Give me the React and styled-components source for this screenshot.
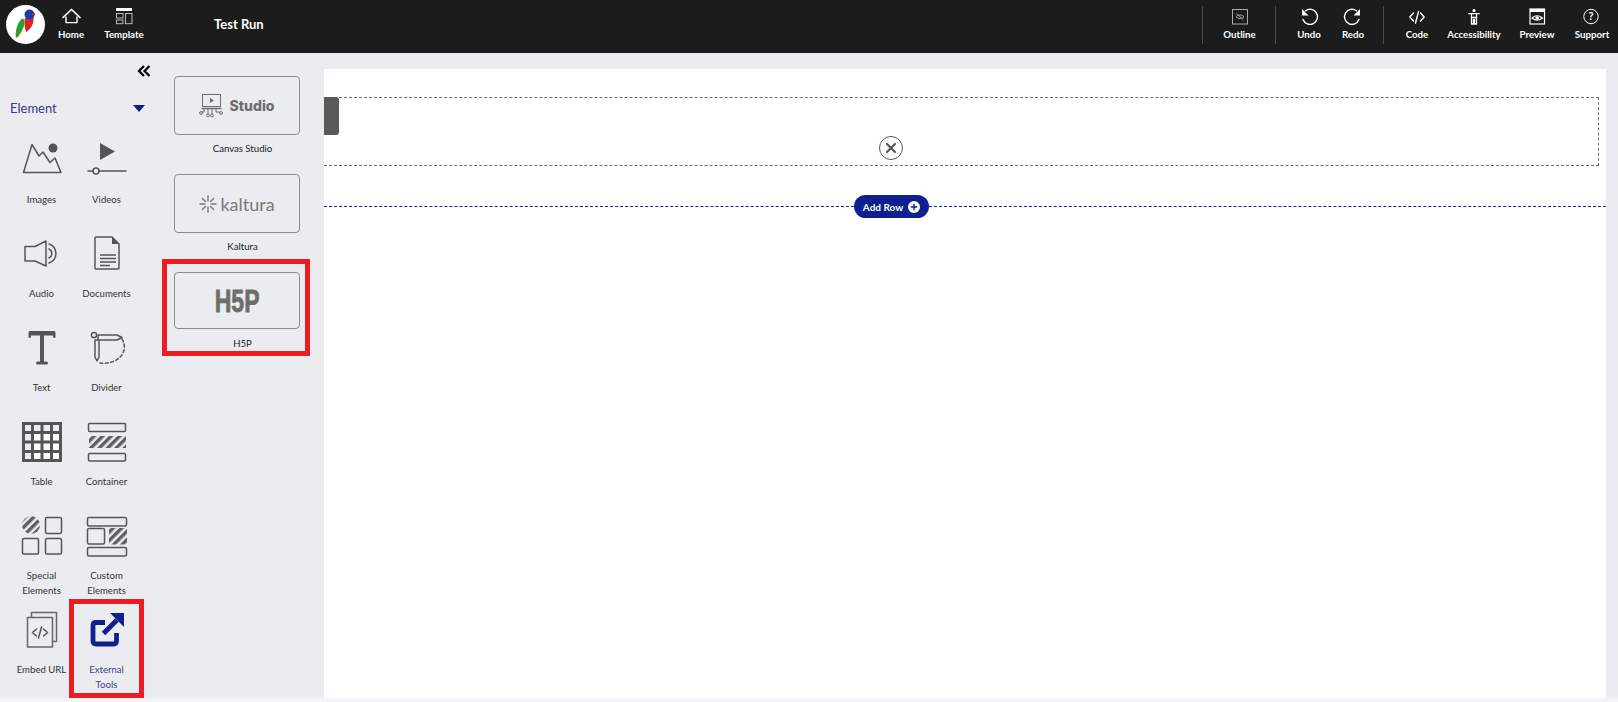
import React from "react";
import styled, { createGlobalStyle } from "styled-components";

const Global = createGlobalStyle`
  html, body { margin: 0; padding: 0; height: 702px; overflow: hidden; background: #f2f4f8; }
  body { font-family: Lato, "Noto Sans", "Liberation Sans", sans-serif; }
  #root { height: 702px; }
`;

const Page = styled.div`
  display: flex;
  flex-direction: column;
  height: 702px;
  background: #f2f4f8;
`;
const TopBar = styled.header`
  display: flex;
  align-items: stretch;
  justify-content: space-between;
  height: 53px;
  background: #1c1c1c;
  color: #fff;
  flex: none;
`;
const TopLeft = styled.div`
  display: flex;
  align-items: flex-start;
  padding-left: 6px;
`;
const TopRight = styled.div`
  display: flex;
  align-items: flex-start;
  padding-right: 10px;
`;
const Logo = styled.div`
  width: 39px;
  height: 39px;
  margin-top: 5px;
  border-radius: 50%;
  background: #fff;
  flex: none;
  overflow: hidden;
`;
const TopItem = styled.div`
  display: flex;
  flex-direction: column;
  align-items: center;
  width: ${(p) => p.$w}px;
  padding-top: ${(p) => p.$top || 7}px;
  gap: ${(p) => (p.$tight ? "0" : "0")};
  flex: none;
  svg { display: block; width: 24px; height: ${(p) => (p.$tight ? 19 : 20)}px; overflow: visible; }
`;
const TopLabel = styled.span`
  font-size: 9.7px;
  font-weight: 700;
  line-height: 14px;
  white-space: nowrap;
  color: #fff;
`;
const Title = styled.div`
  margin-left: 63px;
  font-size: 13px;
  font-weight: 700;
  line-height: 48px;
  color: #fff;
`;
const Section = styled.div`
  display: flex;
  align-items: flex-start;
  height: 38px;
  margin-top: 6px;
  border-left: 1px solid #4a4a4a;
  padding: ${(p) => p.$pad || "0"};
  margin-left: ${(p) => (p.$first ? 0 : -1)}px;
  & > div { padding-top: 1px; }
`;
const Body = styled.div`
  display: flex;
  flex: none;
  height: 645px;
  background: #ebecef;
`;
const Sidebar = styled.aside`
  width: 162px;
  flex: none;
  display: flex;
  flex-direction: column;
`;
const Collapse = styled.div`
  display: flex;
  justify-content: flex-end;
  padding: 11px 11px 0 0;
  height: 14px;
  svg { display: block; width: 14px; height: 14px; }
`;
const CategoryRow = styled.div`
  display: flex;
  align-items: center;
  justify-content: space-between;
  height: 20px;
  margin-top: 20px;
  padding: 0 17px 0 10px;
`;
const Category = styled.span`
  font-size: 13px;
  color: #34388f;
`;
const Caret = styled.span`
  width: 0;
  height: 0;
  border-left: 6px solid transparent;
  border-right: 6px solid transparent;
  border-top: 7px solid #10208f;
`;
const ToolGrid = styled.div`
  display: grid;
  grid-template-columns: 65px 65px;
  grid-auto-rows: 89px;
  row-gap: 5px;
  padding: 16px 0 0 9px;
`;
const Tool = styled.div`
  display: flex;
  flex-direction: column;
  align-items: center;
  padding-top: 4px;
  box-sizing: border-box;
  outline: ${(p) => (p.$marked ? "5px solid #ed1c24" : "none")};
  svg { display: block; width: 65px; height: 48px; flex: none; }
`;
const ToolLabel = styled.span`
  margin-top: 6px;
  font-size: 9.6px;
  line-height: 15px;
  text-align: center;
  white-space: nowrap;
  color: ${(p) => (p.$active ? "#3d4196" : "#333")};
`;
const Gallery = styled.aside`
  width: 162px;
  flex: none;
  padding: 15px 0 0 5px;
  box-sizing: border-box;
`;
const AppGroup = styled.div`
  width: 138px;
  height: ${(p) => p.$h}px;
  padding: 8px 0 0 7px;
  box-sizing: border-box;
  display: flex;
  flex-direction: column;
  align-items: flex-start;
  outline: ${(p) => (p.$marked ? "5px solid #ed1c24" : "none")};
`;
const AppCard = styled.div`
  width: 126px;
  height: ${(p) => p.$h}px;
  flex: none;
  box-sizing: border-box;
  border: 1px solid #8c8c8c;
  border-radius: 4px;
  display: flex;
  align-items: center;
  justify-content: center;
  color: #6d6d6d;
`;
const AppLabel = styled.span`
  align-self: center;
  margin: ${(p) => p.$gap}px 0 0 6px;
  font-size: 9.6px;
  line-height: 15px;
  color: #222;
`;
const StudioWord = styled.span`
  margin-left: 6px;
  font-family: Inter, "Liberation Sans", sans-serif;
  font-size: 14px;
  font-weight: 800;
  line-height: 1;
`;
const KalturaWord = styled.span`
  margin-left: 3px;
  font-family: Lato, "Liberation Sans", sans-serif;
  font-size: 18px;
  line-height: 1;
  color: #7a7a7a;
`;
const H5PWord = styled.span`
  display: inline-block;
  font-family: "Liberation Sans", sans-serif;
  font-size: 32px;
  font-weight: 700;
  line-height: 1;
  transform: scaleX(0.72);
  -webkit-text-stroke: 0.8px #6d6d6d;
  color: #6d6d6d;
`;
const Canvas = styled.main`
  flex: 1;
  margin: 16px 12px 0 0;
  background: #fff;
  padding-top: 28px;
`;
const DropRow = styled.div`
  position: relative;
  height: 69px;
  margin-right: 7px;
  box-sizing: border-box;
  border: 1px dashed #6f6f6f;
  border-left: none;
`;
const RowTab = styled.div`
  position: absolute;
  left: 0;
  top: -1px;
  width: 15px;
  height: 38px;
  background: #5a5a5a;
  border-radius: 0 3px 3px 0;
`;
const CloseButton = styled.div`
  position: absolute;
  left: 555px;
  top: 38px;
  width: 24px;
  height: 24px;
  box-sizing: border-box;
  border: 1px solid #555;
  border-radius: 50%;
  background: #fff;
  display: flex;
  align-items: center;
  justify-content: center;
  svg { width: 12px; height: 12px; display: block; }
`;
const AddRowLine = styled.div`
  display: flex;
  align-items: center;
  margin-top: 29px;
  height: 23px;
`;
const DashSegment = styled.div`
  flex: ${(p) => (p.$w ? `0 0 ${p.$w}px` : "1")};
  border-top: 1px dashed #10208f;
`;
const AddRowButton = styled.div`
  flex: none;
  width: 75px;
  height: 23px;
  border-radius: 12px;
  background: #10208f;
  color: #fff;
  display: flex;
  align-items: center;
  justify-content: center;
  gap: 5px;
  font-size: 10px;
  font-weight: 700;
  svg { width: 12px; height: 12px; display: block; }
`;

const G = { fill: "none", stroke: "#555", strokeWidth: 1.5, strokeLinejoin: "round", strokeLinecap: "round" };

const HatchDef = ({ id }) => (
  <defs>
    <pattern id={id} width="6" height="6" patternUnits="userSpaceOnUse" patternTransform="rotate(45)">
      <rect width="3.4" height="6" fill="#5f5f5f" />
    </pattern>
  </defs>
);

const icons = {
  images: (
    <svg viewBox="0 0 65 48">
      <path {...G} d="M14.5 34.5 L23 6.5 L30 18 L34 14 L41 24.5 L46 20 L52 34.5 Z" />
      <circle cx="44" cy="10" r="4.5" fill="#555" />
    </svg>
  ),
  videos: (
    <svg viewBox="0 0 65 48">
      <path d="M26 5 L41 13.5 L26 22 Z" fill="#555" />
      <path {...G} d="M14 33 H52" />
      <circle cx="22" cy="33" r="3" fill="#ebecef" stroke="#555" strokeWidth="1.5" />
    </svg>
  ),
  audio: (
    <svg viewBox="0 0 65 48">
      <path {...G} d="M16 14.5 H26 L37 9 V34 L26 29 H16 Z" />
      <path {...G} d="M40 12 A10 10 0 0 1 40 31 M40 17 A5 5 0 0 1 40 26" />
    </svg>
  ),
  documents: (
    <svg viewBox="0 0 65 48">
      <path {...G} d="M22 5 H38 L45 12 V36 Q45 37 44 37 H22 Q21 37 21 36 V6 Q21 5 22 5 Z" />
      <path d="M38 5 L45 12 H38 Z" fill="#555" />
      <path {...G} strokeLinecap="butt" d="M26 23 H42 M26 26.5 H42 M26 30 H42 M26 33.5 H36" />
    </svg>
  ),
  text: (
    <svg viewBox="0 0 65 48">
      <path
        fill="#555"
        d="M21 5 H45 Q46.5 5 46.5 6.5 V11 Q46.5 12 45.3 12 Q44 12 44 11 V9.5 H35 V35.5 H37.5 Q39 35.5 39 37 Q39 38.5 37.5 38.5 H28.5 Q27 38.5 27 37 Q27 35.5 28.5 35.5 H31 V9.5 H22 V11 Q22 12 20.8 12 Q19.5 12 19.5 11 V6.5 Q19.5 5 21 5 Z"
      />
    </svg>
  ),
  divider: (
    <svg viewBox="0 0 65 48">
      <circle {...G} cx="20" cy="9" r="2.6" />
      <path {...G} d="M24 9 H43 L48 11.5 L43 14 H24 Z M21 14 H25 V31 L23 35 L21 31 Z" />
      <path {...G} strokeDasharray="3 2.5" d="M48 13 C55 24 46 39 26 37" />
    </svg>
  ),
  table: (
    <svg viewBox="0 0 65 48">
      <rect x="23" y="12" width="29" height="29" fill="#fff" />
      <path
        fill="none"
        stroke="#555"
        strokeWidth="3"
        d="M14.5 3.5 H51.5 V40.5 H14.5 Z M14 12.5 H52 M14 22 H52 M14 31.5 H52 M23.5 3 V41 M33 3 V41 M42.5 3 V41"
      />
    </svg>
  ),
  container: (
    <svg viewBox="0 0 65 48">
      <HatchDef id="hc" />
      <rect {...G} x="14.5" y="3.5" width="37" height="8" rx="1" />
      <rect x="15" y="16" width="37" height="12" fill="url(#hc)" />
      <rect {...G} x="14.5" y="33.5" width="37" height="7.5" rx="1" />
    </svg>
  ),
  special: (
    <svg viewBox="0 0 65 48">
      <HatchDef id="hs" />
      <circle cx="22" cy="11" r="9" fill="url(#hs)" />
      <rect {...G} x="36.5" y="3.5" width="16" height="16" rx="1.5" />
      <rect {...G} x="13.5" y="24.5" width="16" height="15.5" rx="1.5" />
      <rect {...G} x="36.5" y="24.5" width="16" height="15.5" rx="1.5" />
    </svg>
  ),
  custom: (
    <svg viewBox="0 0 65 48">
      <HatchDef id="hx" />
      <rect {...G} x="13.5" y="3.5" width="39" height="8.5" rx="1.5" />
      <rect {...G} x="13.5" y="14.5" width="17" height="15.5" rx="1.5" />
      <rect x="35" y="14" width="18" height="16.5" fill="url(#hx)" />
      <rect {...G} x="13.5" y="33.5" width="39" height="8.5" rx="1.5" />
    </svg>
  ),
  embed: (
    <svg viewBox="0 0 65 48">
      <path {...G} stroke="#666" d="M22.5 9 V4.5 H47.5 V33.5 H43.5" />
      <rect {...G} stroke="#666" x="18.5" y="9.5" width="25" height="29.5" />
      <path {...G} d="M27.5 21 L23.5 24.5 L27.5 28 M34.5 21 L38.5 24.5 L34.5 28 M32.5 19 L29.5 30" />
    </svg>
  ),
  external: (
    <svg viewBox="0 0 65 48">
      <path
        fill="none"
        stroke="#10208f"
        strokeWidth="4.8"
        strokeLinecap="butt"
        d="M31 14.5 H22 Q19 14.5 19 17.5 V33 Q19 36 22 36 H39.5 Q42.5 36 42.5 33 V25"
      />
      <path fill="none" stroke="#10208f" strokeWidth="5" d="M29.5 25.5 L43 12" />
      <path fill="#10208f" d="M36 5 H50 V19 Z" />
    </svg>
  ),
};

const W = { fill: "none", stroke: "#fff", strokeWidth: 1.4, strokeLinejoin: "round", strokeLinecap: "round" };

const ToolData = [
  ["Images", "images"],
  ["Videos", "videos"],
  ["Audio", "audio"],
  ["Documents", "documents"],
  ["Text", "text"],
  ["Divider", "divider"],
  ["Table", "table"],
  ["Container", "container"],
  ["Special\nElements", "special"],
  ["Custom\nElements", "custom"],
  ["Embed URL", "embed"],
  ["External\nTools", "external", true],
];

const UndoIcon = ({ flip }) => (
  <svg viewBox="0 0 24 20" style={flip ? { transform: "scaleX(-1)" } : undefined}>
    <path {...W} d="M8.5 3.8 A7.5 7.5 0 1 1 6 12.5" />
    <path fill="#fff" d="M5 2 V8.5 H11.5 Z" />
  </svg>
);

export default function App() {
  return (
    <Page>
      <Global />
      <TopBar>
        <TopLeft>
          <Logo>
            <svg viewBox="0 0 39 39" width="39" height="39">
              <path fill="#f2d21b" d="M17 13 L21 16 L12 33 L10.5 33 Z" />
              <path fill="#2f9e3a" d="M15.5 14 C18 13 19 17 18 20 C16.5 26 13 31 10 33 C9 27 11 18 15.5 14 Z" />
              <path fill="#d8232f" d="M19 13 L27.5 12 C28 17 26.5 23 20 27 C18.5 23 18.5 17 19 13 Z" />
              <circle cx="23.5" cy="9.5" r="5" fill="#1d3aa8" />
              <circle cx="27.5" cy="9" r="1.6" fill="#c9243a" />
            </svg>
          </Logo>
          <TopItem $w={52} $top={8} $tight>
            <svg viewBox="0 0 24 19">
              <path {...W} strokeWidth="1.7" d="M4 9.5 L12.5 1.5 L21 9.5" />
              <path {...W} d="M7 9 V14.6 H18 V9" />
            </svg>
            <TopLabel>Home</TopLabel>
          </TopItem>
          <TopItem $w={54} $top={8} $tight>
            <svg viewBox="0 0 24 19">
              <rect x="4" y="0" width="16" height="3" fill="#fff" />
              <rect x="4.5" y="5.5" width="6.5" height="4.5" fill="none" stroke="#bbb" />
              <rect x="4.5" y="12" width="6.5" height="3.7" fill="none" stroke="#bbb" />
              <rect x="13.5" y="5.5" width="6.5" height="10.2" fill="none" stroke="#bbb" />
            </svg>
            <TopLabel>Template</TopLabel>
          </TopItem>
          <Title>Test Run</Title>
        </TopLeft>
        <TopRight>
          <Section $first>
            <TopItem $w={73} $top={1}>
              <svg viewBox="0 0 24 20">
                <rect x="4.5" y="2.5" width="15" height="14.5" fill="none" stroke="#aaa" />
                <path fill="none" stroke="#999" strokeWidth="1" d="M8 9.7 Q12 6 16 9.7 Q12 13.4 8 9.7 Z M8.5 6.5 L15.5 13" />
              </svg>
              <TopLabel>Outline</TopLabel>
            </TopItem>
          </Section>
          <Section $pad="0 9px 0 11px">
            <TopItem $w={44} $top={1}>
              <UndoIcon />
              <TopLabel>Undo</TopLabel>
            </TopItem>
            <TopItem $w={44} $top={1}>
              <UndoIcon flip />
              <TopLabel>Redo</TopLabel>
            </TopItem>
          </Section>
          <Section>
            <TopItem $w={66} $top={1}>
              <svg viewBox="0 0 24 20">
                <path {...W} d="M8.5 6 L4.8 10 L8.5 14 M15.5 6 L19.2 10 L15.5 14 M13.5 4.5 L10.5 16" />
              </svg>
              <TopLabel>Code</TopLabel>
            </TopItem>
            <TopItem $w={48} $top={1}>
              <svg viewBox="0 0 24 20">
                <circle cx="12" cy="3.6" r="1.6" fill="#fff" />
                <path {...W} strokeWidth="1.3" d="M6.7 6.7 H17.3 M9.5 6.7 V10.5 H14.5 V6.7 M9.5 10.5 V17 H11.5 V12.5 H12.5 V17 H14.5 V10.5" />
              </svg>
              <TopLabel>Accessibility</TopLabel>
            </TopItem>
            <TopItem $w={78} $top={1}>
              <svg viewBox="0 0 24 20">
                <rect x="5" y="2" width="14.5" height="15" fill="none" stroke="#fff" strokeWidth="1.2" />
                <rect x="5" y="2" width="14.5" height="3" fill="#fff" />
                <path fill="none" stroke="#fff" strokeWidth="1.2" d="M7 11 Q12 6.5 17.5 11 Q12 15.5 7 11 Z" />
                <circle cx="12.2" cy="11" r="1.8" fill="#fff" />
              </svg>
              <TopLabel>Preview</TopLabel>
            </TopItem>
            <TopItem $w={32} $top={1}>
              <svg viewBox="0 0 24 20">
                <circle cx="11" cy="9.5" r="7.2" fill="none" stroke="#fff" strokeWidth="1" />
                <text x="11" y="13" fontSize="10" fontWeight="600" textAnchor="middle" fill="#fff" fontFamily="Noto Sans">?</text>
              </svg>
              <TopLabel>Support</TopLabel>
            </TopItem>
          </Section>
        </TopRight>
      </TopBar>
      <Body>
        <Sidebar>
          <Collapse>
            <svg viewBox="0 0 14 14">
              <path fill="none" stroke="#000" strokeWidth="2.2" d="M7 2 L2 7 L7 12 M12.5 2 L7.5 7 L12.5 12" />
            </svg>
          </Collapse>
          <CategoryRow>
            <Category>Element</Category>
            <Caret />
          </CategoryRow>
          <ToolGrid>
            {ToolData.map(([label, icon, active]) => (
              <Tool key={icon} $marked={active}>
                {icons[icon]}
                <ToolLabel $active={active}>
                  {label.split("\n").map((l) => (
                    <div key={l}>{l}</div>
                  ))}
                </ToolLabel>
              </Tool>
            ))}
          </ToolGrid>
        </Sidebar>
        <Gallery>
          <AppGroup $h={98}>
            <AppCard $h={59}>
              <svg width="24" height="26" viewBox="0 0 24 26" fill="none" stroke="#6d6d6d">
                <rect x="3.5" y="1.5" width="18" height="12" />
                <path d="M2.5 15.5 H22.5" strokeWidth="1.5" />
                <path fill="#6d6d6d" stroke="none" d="M11 5 L15 7.5 L11 10 Z" />
                <path d="M5 16 V19 H2.5 M9 16 V21 M13 16 V21 M17 16 V19 H20.5" />
                <circle cx="2" cy="20" r="1.4" />
                <circle cx="9" cy="22.5" r="1.4" />
                <circle cx="13" cy="22.5" r="1.4" />
                <circle cx="22" cy="20" r="1.4" />
              </svg>
              <StudioWord>Studio</StudioWord>
            </AppCard>
            <AppLabel $gap={6}>Canvas Studio</AppLabel>
          </AppGroup>
          <AppGroup $h={98}>
            <AppCard $h={59}>
              <svg width="18" height="18" viewBox="0 0 18 18" stroke="#777" strokeWidth="1.4" strokeLinecap="round">
                <path d="M9 1 V6 M9 12 V17 M1 9 H6 M12 9 H17 M3.4 3.4 L6.5 6.5 M11.5 11.5 L14.6 14.6 M14.6 3.4 L11.5 6.5 M6.5 11.5 L3.4 14.6" />
              </svg>
              <KalturaWord>kaltura</KalturaWord>
            </AppCard>
            <AppLabel $gap={6}>Kaltura</AppLabel>
          </AppGroup>
          <AppGroup $h={87} $marked>
            <AppCard $h={57}>
              <H5PWord>H5P</H5PWord>
            </AppCard>
            <AppLabel $gap={7}>H5P</AppLabel>
          </AppGroup>
        </Gallery>
        <Canvas>
          <DropRow>
            <RowTab />
            <CloseButton>
              <svg viewBox="0 0 12 12">
                <path stroke="#555" strokeWidth="2.2" strokeLinecap="round" d="M2 2 L10 10 M10 2 L2 10" />
              </svg>
            </CloseButton>
          </DropRow>
          <AddRowLine>
            <DashSegment $w={530} />
            <AddRowButton>
              Add Row
              <svg viewBox="0 0 12 12">
                <circle cx="6" cy="6" r="6" fill="#fff" />
                <path stroke="#10208f" strokeWidth="1.4" d="M6 2.8 V9.2 M2.8 6 H9.2" />
              </svg>
            </AddRowButton>
            <DashSegment />
          </AddRowLine>
        </Canvas>
      </Body>
    </Page>
  );
}
